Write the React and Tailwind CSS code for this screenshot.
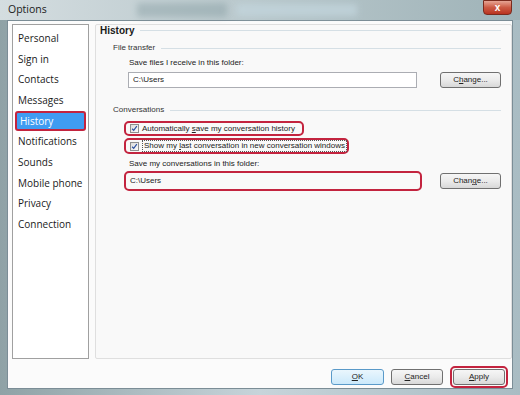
import React from "react";

const navItems = [
  "Personal",
  "Sign in",
  "Contacts",
  "Messages",
  "History",
  "Notifications",
  "Sounds",
  "Mobile phone",
  "Privacy",
  "Connection",
];

function Checkbox() {
  return (
    <span className="w-[9px] h-[9px] border border-[#8e8f8f] bg-gradient-to-br from-[#dcdcdc] to-[#fbfbfb] flex items-center justify-center shrink-0">
      <svg viewBox="0 0 9 9" className="w-[7px] h-[7px]">
        <path d="M1.5 4.8 L3.5 7 L7.5 1.5" fill="none" stroke="#2a4fa0" strokeWidth="1.5" />
      </svg>
    </span>
  );
}

function Button({ children, primary, className = "" }) {
  return (
    <button
      className={
        "h-[16px] rounded-[3px] border bg-gradient-to-b text-[8px] text-[#222] flex items-center justify-center " +
        (primary
          ? "border-[#5a9ac9] from-[#eaf6fd] to-[#cbe9fb] "
          : "border-[#707070] from-[#f6f6f6] via-[#ebebeb] to-[#d8d8d8] ") +
        className
      }
    >
      {children}
    </button>
  );
}

function GroupTitle({ label, className = "" }) {
  return (
    <div className={"flex items-center gap-[6px] pr-[10px] whitespace-nowrap " + className}>
      <span>{label}</span>
      <span className="flex-1 h-px bg-[#d5dfe5]" />
    </div>
  );
}

export default function App() {
  return (
    <div
      className="w-[520px] h-[395px] flex flex-col bg-gradient-to-r from-[#8fa2a6] via-[#c7d4da] to-[#a9bcc3] overflow-hidden"
      style={{ fontFamily: '"Liberation Sans", Arial, sans-serif' }}
    >
      {/* title bar */}
      <div className="h-[20px] flex items-start relative shrink-0">
        <div className="flex-1 h-full bg-gradient-to-r from-[#d4dde0] via-[#b8c7cb] to-[#9fb3b8] flex items-center pl-[8px]">
          <span className="text-[10.5px] text-[#1b1b1b]" style={{ fontFamily: '"Open Sans", sans-serif' }}>
            Options
          </span>
          <div className="ml-[90px] w-[90px] h-[14px] bg-[#7f979c] opacity-40 blur-[3px]" />
          <div className="ml-[10px] w-[120px] h-[12px] bg-[#c4d7df] opacity-70 blur-[3px]" />
        </div>
        <div className="absolute right-[8px] top-0 w-[29px] h-[15px] rounded-b-[4px] border border-[#7a2b1e] bg-gradient-to-b from-[#e6a494] via-[#cc5a44] to-[#b9331f] flex items-center justify-center">
          <span className="text-white text-[10px] font-bold leading-none">x</span>
        </div>
      </div>

      {/* client area */}
      <div className="mx-[7px] h-[369px] bg-[#fbfbfb] border border-[#7b8d96] flex flex-col shrink-0">
        <div className="flex pt-[3px] pl-[4px] gap-[6px] h-[339px]">
          {/* nav list */}
          <div className="w-[77px] h-full bg-white border border-[#a0a0a0] pt-[3px] px-[2px] flex flex-col">
            {navItems.map((item) => {
              const active = item === "History";
              return (
                <div
                  key={item}
                  className={
                    "h-[20.7px] flex items-center pl-[3px] text-[10px] whitespace-nowrap " +
                    (active
                      ? "bg-[#3f9cf2] text-white rounded-[3px] border-2 border-[#c3243f] pl-[1px]"
                      : "text-[#1a1a1a]")
                  }
                  style={{ fontFamily: '"Open Sans", sans-serif' }}
                >
                  {item}
                </div>
              );
            })}
          </div>

          {/* settings panel */}
          <div className="flex-1 h-full bg-[#f9f9f9] border border-[#dfdfdf] rounded-[2px] pl-[4px] text-[8px] text-[#222]">
            <GroupTitle
              label={<span className="text-[10px] font-bold text-[#1a1a1a]">History</span>}
              className="h-[11px] mt-0"
            />
            <GroupTitle label="File transfer" className="h-[10px] mt-[7px] pl-[13px] text-[#333]" />
            <div className="pl-[29px] pr-[10px] mt-[5px] h-[10px] flex items-center whitespace-nowrap">
              Save files I receive in this folder:
            </div>
            <div className="pl-[28px] pr-[10px] mt-[4px] flex items-center">
              <div className="w-[289px] h-[16px] bg-white border border-[#abadb3] flex items-center pl-[4px]">
                C:\Users
              </div>
              <Button className="ml-auto w-[61px]">
                C<u>h</u>ange...
              </Button>
            </div>
            <GroupTitle label="Conversations" className="h-[10px] mt-[17px] pl-[13px] text-[#333]" />
            <div className="pl-[24px] mt-[6px] flex">
              <div className="h-[15px] w-[180px] border-2 border-[#c3243f] rounded-[5px] flex items-center pl-[4px] gap-[3px] whitespace-nowrap">
                <Checkbox />
                <span>
                  Automatically <u>s</u>ave my conversation history
                </span>
              </div>
            </div>
            <div className="pl-[24px] mt-[2px] flex">
              <div className="h-[16px] w-[225px] border-2 border-[#c3243f] rounded-[5px] flex items-center pl-[4px] gap-[3px] whitespace-nowrap">
                <Checkbox />
                <span className="border border-dotted border-[#555] leading-[10px] px-px">
                  Show my <u>l</u>ast conversation in new conversation windows
                </span>
              </div>
            </div>
            <div className="pl-[29px] pr-[10px] mt-[5px] h-[10px] flex items-center whitespace-nowrap">
              Save my conversations in this folder:
            </div>
            <div className="pl-[24px] pr-[10px] mt-[2px] flex items-center">
              <div className="w-[298px] h-[20px] border-2 border-[#c3243f] rounded-[5px] flex items-center pl-[4px]">
                C:\Users
              </div>
              <Button className="ml-auto w-[61px]">
                Chan<u>g</u>e...
              </Button>
            </div>
          </div>
        </div>

        {/* bottom buttons */}
        <div className="flex items-center justify-end pr-[4px] mt-[7px] gap-[7px]">
          <Button primary className="w-[53px]">
            <u>O</u>K
          </Button>
          <Button className="w-[52px]">
            <u>C</u>ancel
          </Button>
          <div className="border-2 border-[#c3243f] rounded-[5px] p-px">
            <Button className="w-[52px]">
              <u>A</u>pply
            </Button>
          </div>
        </div>
      </div>
    </div>
  );
}
